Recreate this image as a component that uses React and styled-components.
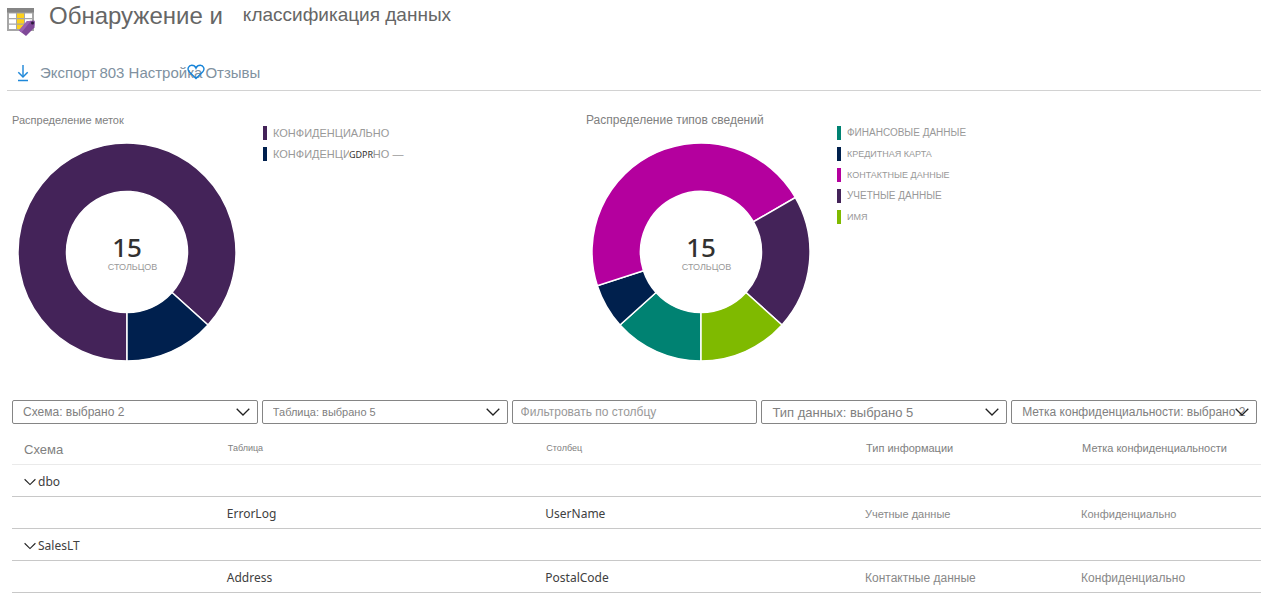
import React from "react";
import styled, { createGlobalStyle } from "styled-components";

const GlobalStyle = createGlobalStyle`
  * { box-sizing: border-box; }
  body {
    margin: 0;
    background: #fff;
    color: #808080;
    font-family: "Liberation Sans", Arial, sans-serif;
    font-size: 12px;
  }
`;

const latin = `"Noto Sans", "Open Sans", sans-serif`;

const Page = styled.div`
  display: flex;
  flex-direction: column;
`;

const Header = styled.header`
  display: flex;
  align-items: flex-start;
  padding: 2px 7px 0;
  height: 56px;

  svg { margin-top: 6px; flex: none; }
`;

const Title = styled.h1`
  display: flex;
  align-items: flex-start;
  gap: 20px;
  margin: 0 0 0 13px;
  color: #666;
  font-weight: 400;
  font-size: 24px;
  line-height: 28px;
`;

const Subtitle = styled.span`
  font-size: 19px;
  line-height: 26px;
`;

const Toolbar = styled.div`
  display: flex;
  align-items: center;
  gap: 3px;
  height: 35px;
  margin-left: 7px;
  padding-left: 9px;
  border-bottom: 1px solid #d2d2d2;
`;

const ToolButton = styled.button`
  position: relative;
  display: flex;
  align-items: center;
  gap: 10px;
  padding: 0;
  border: 0;
  background: none;
  color: #8091a0;
  font: 15px/18px "Liberation Sans", Arial, sans-serif;
`;

const HeartBadge = styled.span`
  position: absolute;
  left: -18px;
  top: 0;
  line-height: 0;
`;

const Charts = styled.main`
  display: grid;
  grid-template-columns: 574px 1fr;
  padding: 20px 0 0 12px;
`;

const Panel = styled.section`
  display: flex;
  gap: 27px;
  height: 289px;
`;

const ChartColumn = styled.div`
  width: 224px;
`;

const ChartTitle = styled.h2`
  margin: 0;
  height: 32px;
  color: #808080;
  font-weight: 400;
  font-size: ${(p) => p.$size}px;
  line-height: 18px;
  white-space: nowrap;
`;

const DonutBox = styled.div`
  display: grid;
  justify-content: center;
  padding-left: 6px;

  > * { grid-area: 1 / 1; }
`;

const DonutLabel = styled.div`
  display: flex;
  flex-direction: column;
  align-items: center;
  align-self: center;
`;

const DonutNumber = styled.strong`
  color: #323130;
  font: 500 26px/30px ${latin};
`;

const DonutCaption = styled.span`
  padding-left: 11px;
  color: #999;
  font-size: 9px;
  line-height: 10px;
`;

const Legend = styled.ul`
  display: flex;
  flex-direction: column;
  gap: 7px;
  margin: 0;
  padding: 15px 0 0;
  list-style: none;
`;

const LegendItem = styled.li`
  position: relative;
  height: 14px;
  padding-left: 6px;
  border-left: 4px solid ${(p) => p.$color};
  color: #999;
  font-size: ${(p) => p.$size}px;
  line-height: 14px;
  white-space: nowrap;
`;

const LegendTag = styled.span`
  position: absolute;
  left: 82px;
  top: 1px;
  background: #fff;
  color: #323130;
  font: 9px/13px ${latin};
`;

const Filters = styled.form`
  display: grid;
  grid-template-columns: repeat(5, 1fr);
  gap: 4px;
  padding: 0 4px 0 12px;
`;

const FilterBox = styled.label`
  display: grid;
  align-items: center;
  min-width: 0;
  height: 24px;
  border: 1px solid #858585;
  border-radius: 2px;

  > * { grid-area: 1 / 1; min-width: 0; }
  svg { justify-self: end; margin-right: 7px; pointer-events: none; }
`;

const control = `
  width: 100%;
  height: 22px;
  border: 0;
  outline: 0;
  background: transparent;
  color: #808080;
  font-family: "Liberation Sans", Arial, sans-serif;
`;

const Select = styled.select`
  ${control}
  appearance: none;
  padding: 0 0 0 10px;
  font-size: ${(p) => p.$size}px;
`;

const Input = styled.input`
  ${control}
  padding: 0 8px;
  font-size: 12px;
  &::placeholder { color: #999; opacity: 1; }
`;

const Table = styled.table`
  width: calc(100% - 12px);
  margin-left: 12px;
  table-layout: fixed;
  border-collapse: separate;
  border-spacing: 0;
`;

const Col = styled.col`
  width: ${(p) => p.$width};
`;

const HeadCell = styled.th`
  height: 41px;
  padding: ${(p) => (p.$first ? "11px 0 0 12px" : "7px 0 0 1px")};
  border-bottom: 1px solid #eaeaea;
  color: #808080;
  font-weight: 400;
  font-size: ${(p) => p.$size}px;
  text-align: left;
`;

const Cell = styled.td`
  height: 32px;
  padding: 2px 0 0;
  border-bottom: 1px solid #c8c8c8;
  color: #888;
  font-size: ${(p) => p.$size || 12}px;
  line-height: 18px;
`;

const Name = styled.span`
  color: #404040;
  font: 12px/18px ${latin};
`;

const GroupButton = styled.button`
  display: flex;
  align-items: center;
  gap: 2px;
  padding: 0 0 0 12px;
  border: 0;
  background: none;
`;

function polar(c, r, deg) {
  const a = ((deg - 90) * Math.PI) / 180;
  return `${(c + r * Math.cos(a)).toFixed(2)} ${(c + r * Math.sin(a)).toFixed(2)}`;
}

function Donut({ slices }) {
  const c = 109, R = 109, r = 60.5;
  const total = slices.reduce((sum, s) => sum + s.value, 0);
  let angle = 180;
  return (
    <svg width="218" height="218" viewBox="0 0 218 218">
      {slices.map((s) => {
        const start = angle;
        const end = angle + (s.value / total) * 360;
        angle = end;
        const big = end - start > 180 ? 1 : 0;
        return (
          <path
            key={s.color}
            fill={s.color}
            stroke="#fff"
            strokeWidth="1.5"
            d={`M${polar(c, R, start)} A${R} ${R} 0 ${big} 1 ${polar(c, R, end)} L${polar(c, r, end)} A${r} ${r} 0 ${big} 0 ${polar(c, r, start)}Z`}
          />
        );
      })}
    </svg>
  );
}

function Chart({ title, size, slices, legend }) {
  return (
    <Panel>
      <ChartColumn>
        <ChartTitle $size={size}>{title}</ChartTitle>
        <DonutBox>
          <Donut slices={slices} />
          <DonutLabel>
            <DonutNumber>15</DonutNumber>
            <DonutCaption>СТОЛЬЦОВ</DonutCaption>
          </DonutLabel>
        </DonutBox>
      </ChartColumn>
      <Legend>
        {legend.map((item, i) => (
          <LegendItem key={i} $color={item.color} $size={item.size}>
            {item.text}
            {item.tag && <LegendTag>{item.tag}</LegendTag>}
          </LegendItem>
        ))}
      </Legend>
    </Panel>
  );
}

const Chevron = ({ width = 14 }) => (
  <svg width={width} height="8" viewBox="0 0 14 8" fill="none" stroke="#222" strokeWidth="1.3">
    <path d="M.7.8 7 7 13.3.8" />
  </svg>
);

const DataIcon = () => (
  <svg width="29" height="29" viewBox="0 0 29 29">
    <path fill="#a6a6a6" d="M0 0h27v23H0z" />
    <path fill="#858585" d="M0 0h27v4.500H0z" />
    <path fill="#fff" d="M2 5.500h7V10H2zM2 11.200h7v4.300H2zM2 16.700h7V21H2zM18 5.500h7V10h-7zM18 11.200h7v4.300h-7z" />
    <path fill="#fcd01c" d="M10 5.500h7V10h-7zM10 11.200h7v4.300h-7zM10 16.700h7V21h-7z" />
    <path fill="#804998" d="M12 22.500 19.800 13.200l6.700-.7q1.400 0 1.400 1.400l-.4 5.600L19 28z" />
    <path fill="#9a62b3" d="M12 22.500 19.800 13.200l4.200-.4L14.500 24.500z" />
    <circle cx="25.500" cy="15" r="1.500" fill="#2d1b3d" />
  </svg>
);

const DownloadIcon = () => (
  <svg width="14" height="18" viewBox="0 0 14 18" fill="none" stroke="#1e88d9" strokeWidth="1.5">
    <path d="M7 1v12" stroke="#5ea9e3" strokeWidth="2" />
    <path d="M2.300 8.300 7 13l4.700-4.700M2 16.500h10" />
  </svg>
);

const HeartIcon = () => (
  <svg width="18" height="16" viewBox="0 0 18 16" fill="none" stroke="#1583d8" strokeWidth="1.4">
    <path d="M9 14.500 2.200 7.800C-.3 5 1.700 1.300 4.700 1.300 6.800 1.300 8.300 2.500 9 4.200 9.700 2.500 11.200 1.300 13.300 1.300c3 0 5 3.700 2.500 6.500Z" />
  </svg>
);

const labelSlices = [
  { color: "#442359", value: 13 },
  { color: "#00204e", value: 2 },
];

const typeSlices = [
  { color: "#008272", value: 2 },
  { color: "#00204d", value: 1 },
  { color: "#b4009e", value: 7 },
  { color: "#442359", value: 3 },
  { color: "#7fba00", value: 2 },
];

const labelLegend = [
  { color: "#442359", size: 11, text: "КОНФИДЕНЦИАЛЬНО" },
  { color: "#00204e", size: 11, text: "КОНФИДЕНЦИАЛЬНО —", tag: "GDPR" },
];

const typeLegend = [
  { color: "#008272", size: 10, text: "ФИНАНСОВЫЕ ДАННЫЕ" },
  { color: "#00204d", size: 9, text: "КРЕДИТНАЯ КАРТА" },
  { color: "#b4009e", size: 9, text: "КОНТАКТНЫЕ ДАННЫЕ" },
  { color: "#442359", size: 10, text: "УЧЕТНЫЕ ДАННЫЕ" },
  { color: "#7fba00", size: 9, text: "ИМЯ" },
];

function Filter({ text, size }) {
  return (
    <FilterBox>
      <Select $size={size} aria-label={text}>
        <option>{text}</option>
      </Select>
      <Chevron />
    </FilterBox>
  );
}

function Group({ name }) {
  return (
    <tr>
      <Cell colSpan={5}>
        <GroupButton type="button">
          <Chevron width={12} />
          <Name>{name}</Name>
        </GroupButton>
      </Cell>
    </tr>
  );
}

function Row({ table, column, type, label, size }) {
  return (
    <tr>
      <Cell />
      <Cell><Name>{table}</Name></Cell>
      <Cell><Name>{column}</Name></Cell>
      <Cell $size={size}>{type}</Cell>
      <Cell $size={size}>{label}</Cell>
    </tr>
  );
}

export default function App() {
  return (
    <Page>
      <GlobalStyle />
      <Header>
        <DataIcon />
        <Title>
          Обнаружение и
          <Subtitle>классификация данных</Subtitle>
        </Title>
      </Header>
      <Toolbar>
        <ToolButton type="button">
          <DownloadIcon />
          Экспорт
        </ToolButton>
        <ToolButton type="button">803 Настройка</ToolButton>
        <ToolButton type="button">
          <HeartBadge><HeartIcon /></HeartBadge>
          Отзывы
        </ToolButton>
      </Toolbar>
      <Charts>
        <Chart title="Распределение меток" size={11} slices={labelSlices} legend={labelLegend} />
        <Chart title="Распределение типов сведений" size={12} slices={typeSlices} legend={typeLegend} />
      </Charts>
      <Filters>
        <Filter text="Схема: выбрано 2" size={12} />
        <Filter text="Таблица: выбрано 5" size={11} />
        <FilterBox>
          <Input aria-label="Фильтровать по столбцу" placeholder="Фильтровать по столбцу" />
        </FilterBox>
        <Filter text="Тип данных: выбрано 5" size={13} />
        <Filter text="Метка конфиденциальности: выбрано 2" size={12} />
      </Filters>
      <Table>
        <colgroup>
          <Col $width="17.2%" />
          <Col $width="25.5%" />
          <Col $width="25.6%" />
          <Col $width="17.3%" />
          <Col $width="auto" />
        </colgroup>
        <thead>
          <tr>
            <HeadCell $first $size={13}>Схема</HeadCell>
            <HeadCell $size={9}>Таблица</HeadCell>
            <HeadCell $size={9}>Столбец</HeadCell>
            <HeadCell $size={11}>Тип информации</HeadCell>
            <HeadCell $size={11}>Метка конфиденциальности</HeadCell>
          </tr>
        </thead>
        <tbody>
          <Group name="dbo" />
          <Row table="ErrorLog" column="UserName" type="Учетные данные" label="Конфиденциально" size={11} />
          <Group name="SalesLT" />
          <Row table="Address" column="PostalCode" type="Контактные данные" label="Конфиденциально" size={12} />
        </tbody>
      </Table>
    </Page>
  );
}
